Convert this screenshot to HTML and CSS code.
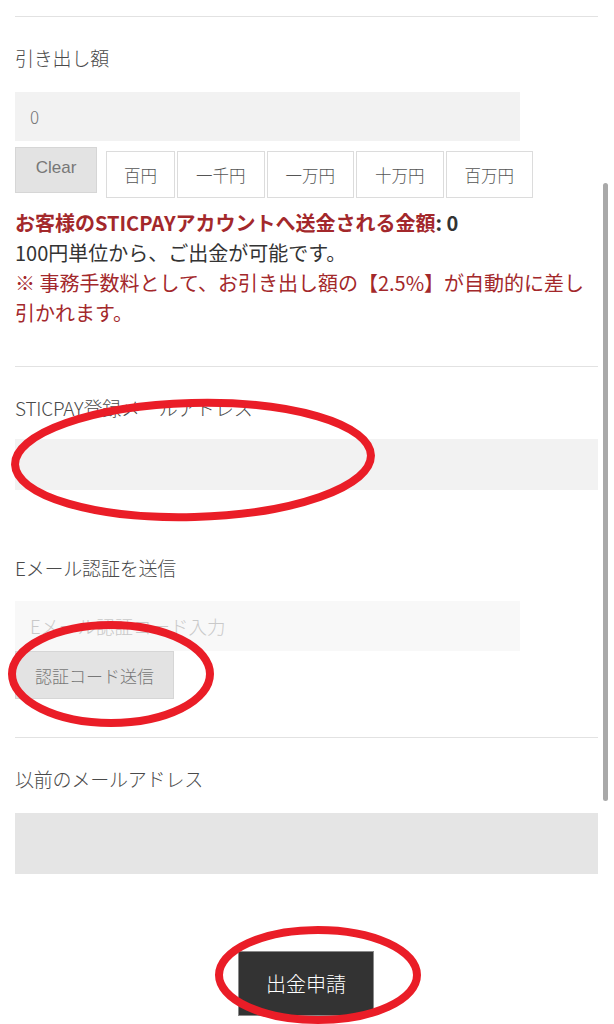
FILE: index.html
```html
<!DOCTYPE html>
<html lang="ja">
<head>
<meta charset="utf-8">
<title>出金申請</title>
<link rel="stylesheet" href="styles.css">
</head>
<body>
<main class="page">
  <section class="block block-first">
    <div class="label">引き出し額</div>
    <div class="field field-short">0</div>
    <div class="amount-row">
      <button class="btn-clear">Clear</button>
      <div class="amounts">
        <button class="amt">百円</button>
        <button class="amt">一千円</button>
        <button class="amt">一万円</button>
        <button class="amt">十万円</button>
        <button class="amt">百万円</button>
      </div>
    </div>
    <div class="notes">
      <p class="note-strong"><span class="red">お客様のSTICPAYアカウントへ送金される金額</span>: 0</p>
      <p>100円単位から、ご出金が可能です。</p>
      <p class="red">※ 事務手数料として、お引き出し額の【2.5%】が自動的に差し引かれます。</p>
    </div>
  </section>

  <section class="block">
    <div class="label">STICPAY登録メールアドレス</div>
    <div class="field field-full field-email"></div>
    <div class="label label-spaced">Eメール認証を送信</div>
    <div class="field field-short field-code">Eメール認証コード入力</div>
    <button class="btn-send">認証コード送信</button>
  </section>

  <section class="block block-last">
    <div class="label">以前のメールアドレス</div>
    <div class="field field-full field-disabled"></div>
  </section>

  <div class="submit-wrap">
    <button class="btn-submit">出金申請</button>
  </div>
</main>

<div class="scrollbar"></div>

<svg class="marks" width="614" height="1024" viewBox="0 0 614 1024">
  <ellipse cx="193" cy="460" rx="178" ry="57" transform="rotate(-1.5 193 460)"/>
  <ellipse cx="111" cy="674" rx="99" ry="49"/>
  <ellipse cx="318" cy="975" rx="99" ry="45"/>
</svg>
</body>
</html>
```

FILE: styles.css
```css
* { box-sizing: border-box; }

html, body {
  margin: 0;
  padding: 0;
  background: #fff;
}

body {
  font-family: "Noto Sans CJK JP", "Noto Sans", "Liberation Sans", sans-serif;
  color: #333;
  width: 614px;
  height: 1024px;
  overflow: hidden;
  position: relative;
}

.page {
  padding: 16px 16px 0 15px;
}

.block {
  border-top: 1px solid #e2e2e2;
  padding-top: 26px;
  padding-bottom: 38px;
}

.block-last {
  padding-bottom: 0;
}

.label {
  font-size: 19px;
  line-height: 30px;
  font-weight: 300;
  color: #4a4a4a;
  letter-spacing: -0.2px;
}

.label-spaced {
  margin-top: 63px;
}

.field {
  background: #f2f2f2;
  margin-top: 19px;
  height: 49px;
  font-size: 17px;
  line-height: 49px;
  padding-left: 15px;
  color: #777;
  font-weight: 300;
}

.field-short { width: 505px; }
.field-full { width: 583px; }

.field-email {
  margin-top: 16px;
  height: 51px;
}

.field-code {
  margin-top: 18px;
  height: 50px;
  line-height: 50px;
  background: #f8f8f8;
  color: #c9c9c9;
  font-size: 18.5px;
}

.field-disabled {
  height: 61px;
  background: #e5e5e5;
}

.amount-row {
  display: flex;
  align-items: flex-start;
  margin-top: 6px;
}

button {
  font-family: inherit;
  margin: 0;
  cursor: pointer;
}

.btn-clear {
  width: 82px;
  height: 46px;
  background: #e3e3e3;
  border: 1px solid #d6d6d6;
  color: #777;
  font-size: 17px;
  font-family: "Liberation Sans", "Noto Sans CJK JP", sans-serif;
  padding: 0 0 4px;
}

.amounts {
  display: flex;
  gap: 2px;
  margin-left: 9px;
  margin-top: 4px;
}

.amt {
  height: 47px;
  background: #fff;
  border: 1.5px solid #dcdcdc;
  color: #555;
  font-size: 16.5px;
  font-weight: 300;
  padding: 0 18px;
}

.amt:first-child {
  padding: 0 17px;
}

.notes {
  margin-top: 10px;
  font-size: 20px;
  line-height: 30px;
  color: #333;
  padding-right: 6px;
}

.notes p {
  margin: 0;
}

.note-strong {
  font-weight: 700;
}

.red {
  color: #a3282b;
}

.btn-send {
  display: block;
  width: 159px;
  height: 48px;
  background: #e3e3e3;
  border: 1px solid #d6d6d6;
  color: #777;
  font-size: 17px;
  font-weight: 300;
  padding: 0;
}

.submit-wrap {
  display: flex;
  justify-content: center;
  margin-top: 77px;
  padding-right: 1px;
}

.btn-submit {
  width: 136px;
  height: 65px;
  background: #333;
  border: 1px solid #8a8a8a;
  color: #fff;
  font-size: 20px;
  font-weight: 300;
  padding: 0;
}

.scrollbar {
  position: absolute;
  left: 603px;
  top: 183px;
  width: 5px;
  height: 618px;
  border-radius: 3px;
  background: #a9a9a9;
}

.marks {
  position: absolute;
  left: 0;
  top: 0;
  pointer-events: none;
}

.marks ellipse {
  fill: none;
  stroke: #ea1d27;
  stroke-width: 8;
}
```
